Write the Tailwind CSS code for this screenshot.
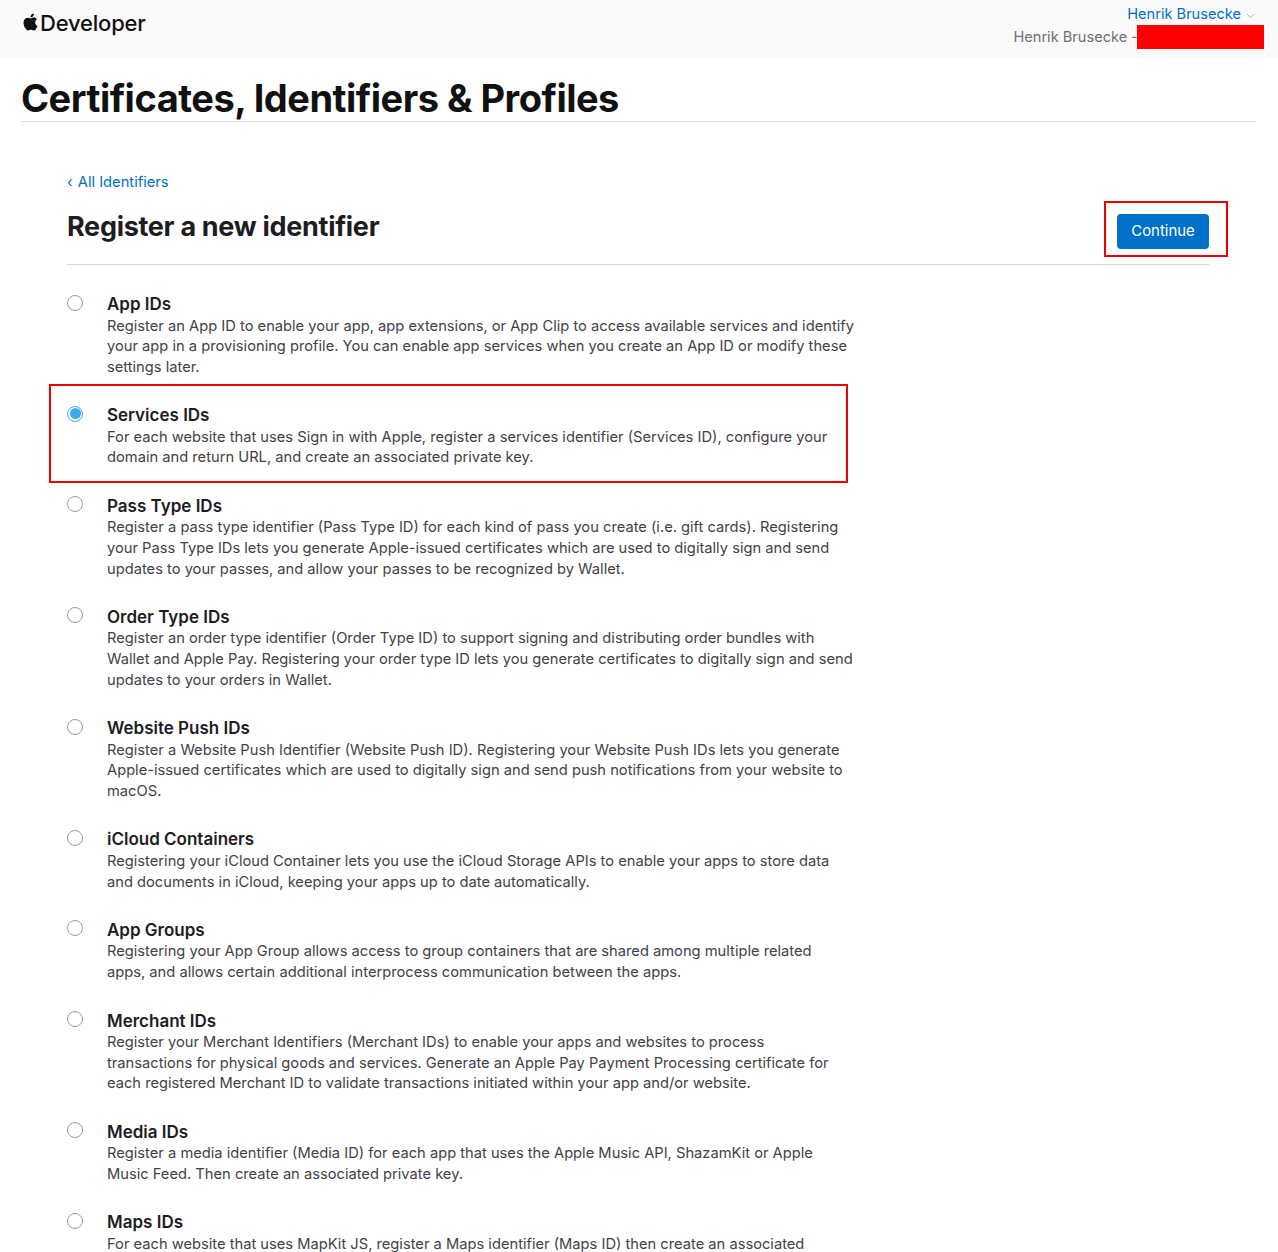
<!DOCTYPE html>
<html lang="en">
<head>
    <meta charset="UTF-8">
    <meta name="viewport" content="width=device-width, initial-scale=1.0">
    <script src="https://cdn.jsdelivr.net/npm/@tailwindcss/browser@4"></script>
    <title>Register a new identifier</title>
</head>
<body class="bg-white font-['Inter',sans-serif] text-[#1d1d1f] h-[1252px] overflow-hidden">
    <!-- Top bar -->
    <header class="h-[57px] bg-[#fafafa] flex justify-between pl-[22px] pr-[14px]">
        <a class="flex items-start pt-[10px] text-[22px] leading-[26px] font-medium tracking-[-0.2px] text-[#111]">
            <svg class="w-[17px] h-[20px] mt-[2px] mr-[1px]" viewBox="0 0 24 24" fill="#111"><path d="M12.152 6.896c-.948 0-2.415-1.078-3.96-1.04-2.04.027-3.91 1.183-4.961 3.014-2.117 3.675-.546 9.103 1.519 12.09 1.013 1.454 2.208 3.09 3.792 3.039 1.52-.065 2.09-.987 3.935-.987 1.831 0 2.35.987 3.96.948 1.637-.026 2.676-1.48 3.676-2.948 1.156-1.688 1.636-3.325 1.662-3.415-.039-.013-3.182-1.221-3.22-4.857-.026-3.04 2.48-4.494 2.597-4.559-1.429-2.09-3.623-2.324-4.39-2.376-2-.156-3.675 1.09-4.61 1.09zM15.53 3.83c.843-1.012 1.4-2.427 1.245-3.83-1.207.052-2.662.805-3.532 1.818-.78.896-1.454 2.338-1.273 3.714 1.338.104 2.715-.688 3.559-1.701"/></svg>
            <span>Developer</span>
        </a>
        <div class="text-[14.6px] leading-[23px] pt-[3px]">
            <div class="flex items-center justify-end pr-[9px] text-[#0070c9]">
                <span>Henrik Brusecke</span>
                <svg class="w-[9px] h-[6px] ml-[5px] mt-[2px]" viewBox="0 0 9 6" fill="none" stroke="#8fbde6" stroke-width="1"><path d="M1 1l3.5 3.5L8 1"/></svg>
            </div>
            <div class="flex items-center justify-end text-[#6e6e73]">
                <span>Henrik Brusecke -</span>
                <span class="w-[127px] h-[24px] bg-[#ff0000] -ml-[1px] -mt-[2px] block"></span>
            </div>
        </div>
    </header>

    <main class="px-[21px] pr-[23px]">
        <h1 class="h-[65px] pt-[17px] text-[38px] leading-[48px] font-bold tracking-[-0.5px] text-[#111] border-b border-[#e0e0e0] whitespace-nowrap">Certificates, Identifiers &amp; Profiles</h1>

        <div class="mx-[46px] pt-[50px]">
            <a class="block text-[14.7px] leading-[20px] text-[#0070c9]"><span class="mr-[1px]">‹</span> All Identifiers</a>

            <div class="flex items-center justify-between h-[71px] pb-[2px] border-b border-[#d6d6d6] mt-[2px]">
                <h2 class="text-[27px] leading-[34px] font-bold tracking-[-0.3px] text-[#1d1d1f] -mt-[3px]">Register a new identifier</h2>
                <div class="relative mt-[7px]">
                    <button class="block w-[92px] h-[35px] -mt-[1px] rounded-[4px] bg-[#0070c9] text-white text-[14.9px]">Continue</button>
                    <div class="absolute -left-[13px] -top-[14px] w-[124px] h-[56px] border-2 border-[#f00000]"></div>
                </div>
            </div>

            <!-- Identifier types -->
            <div class="pt-[29px]">
                <div class="flex h-[111.2px]">
                    <span class="w-[16px] h-[16px] mt-[0.5px] mr-[24px] shrink-0 rounded-full border border-[#9a9aa8] bg-white"></span>
                    <div class="w-[749px]">
                        <h3 class="text-[17px] leading-[21px] mb-[0.5px] font-semibold text-[#1d1d1f]">App IDs</h3>
                        <p class="text-[14.7px] leading-[20.7px] text-[#424245]">Register an App ID to enable your app, app extensions, or App Clip to access available services and identify your app in a provisioning profile. You can enable app services when you create an App ID or modify these settings later.</p>
                    </div>
                </div>
                <div class="flex h-[90.6px] relative">
                    <span class="w-[16px] h-[16px] mt-[0.5px] mr-[24px] shrink-0 rounded-full border border-[#3fa9ee] bg-white flex items-center justify-center"><span class="w-[11px] h-[11px] rounded-full bg-[#3fa9ee]"></span></span>
                    <div class="w-[749px]">
                        <h3 class="text-[17px] leading-[21px] mb-[0.5px] font-semibold text-[#1d1d1f]">Services IDs</h3>
                        <p class="text-[14.7px] leading-[20.7px] text-[#424245]">For each website that uses Sign in with Apple, register a services identifier (Services ID), configure your domain and return URL, and create an associated private key.</p>
                    </div>
                    <div class="absolute -left-[18px] -top-[21px] w-[799px] h-[99px] border-2 border-[#f00000]"></div>
                </div>
                <div class="flex h-[111.2px]">
                    <span class="w-[16px] h-[16px] mt-[0.5px] mr-[24px] shrink-0 rounded-full border border-[#9a9aa8] bg-white"></span>
                    <div class="w-[749px]">
                        <h3 class="text-[17px] leading-[21px] mb-[0.5px] font-semibold text-[#1d1d1f]">Pass Type IDs</h3>
                        <p class="text-[14.7px] leading-[20.7px] text-[#424245]">Register a pass type identifier (Pass Type ID) for each kind of pass you create (i.e. gift cards). Registering your Pass Type IDs lets you generate Apple-issued certificates which are used to digitally sign and send updates to your passes, and allow your passes to be recognized by Wallet.</p>
                    </div>
                </div>
                <div class="flex h-[111.2px]">
                    <span class="w-[16px] h-[16px] mt-[0.5px] mr-[24px] shrink-0 rounded-full border border-[#9a9aa8] bg-white"></span>
                    <div class="w-[749px]">
                        <h3 class="text-[17px] leading-[21px] mb-[0.5px] font-semibold text-[#1d1d1f]">Order Type IDs</h3>
                        <p class="text-[14.7px] leading-[20.7px] text-[#424245]">Register an order type identifier (Order Type ID) to support signing and distributing order bundles with Wallet and Apple Pay. Registering your order type ID lets you generate certificates to digitally sign and send updates to your orders in Wallet.</p>
                    </div>
                </div>
                <div class="flex h-[111.2px]">
                    <span class="w-[16px] h-[16px] mt-[0.5px] mr-[24px] shrink-0 rounded-full border border-[#9a9aa8] bg-white"></span>
                    <div class="w-[749px]">
                        <h3 class="text-[17px] leading-[21px] mb-[0.5px] font-semibold text-[#1d1d1f]">Website Push IDs</h3>
                        <p class="text-[14.7px] leading-[20.7px] text-[#424245]">Register a Website Push Identifier (Website Push ID). Registering your Website Push IDs lets you generate Apple-issued certificates which are used to digitally sign and send push notifications from your website to macOS.</p>
                    </div>
                </div>
                <div class="flex h-[90.6px]">
                    <span class="w-[16px] h-[16px] mt-[0.5px] mr-[24px] shrink-0 rounded-full border border-[#9a9aa8] bg-white"></span>
                    <div class="w-[749px]">
                        <h3 class="text-[17px] leading-[21px] mb-[0.5px] font-semibold text-[#1d1d1f]">iCloud Containers</h3>
                        <p class="text-[14.7px] leading-[20.7px] text-[#424245]">Registering your iCloud Container lets you use the iCloud Storage APIs to enable your apps to store data and documents in iCloud, keeping your apps up to date automatically.</p>
                    </div>
                </div>
                <div class="flex h-[90.6px]">
                    <span class="w-[16px] h-[16px] mt-[0.5px] mr-[24px] shrink-0 rounded-full border border-[#9a9aa8] bg-white"></span>
                    <div class="w-[749px]">
                        <h3 class="text-[17px] leading-[21px] mb-[0.5px] font-semibold text-[#1d1d1f]">App Groups</h3>
                        <p class="text-[14.7px] leading-[20.7px] text-[#424245]">Registering your App Group allows access to group containers that are shared among multiple related<br>apps, and allows certain additional interprocess communication between the apps.</p>
                    </div>
                </div>
                <div class="flex h-[111.2px]">
                    <span class="w-[16px] h-[16px] mt-[0.5px] mr-[24px] shrink-0 rounded-full border border-[#9a9aa8] bg-white"></span>
                    <div class="w-[749px]">
                        <h3 class="text-[17px] leading-[21px] mb-[0.5px] font-semibold text-[#1d1d1f]">Merchant IDs</h3>
                        <p class="text-[14.7px] leading-[20.7px] text-[#424245]">Register your Merchant Identifiers (Merchant IDs) to enable your apps and websites to process<br>transactions for physical goods and services. Generate an Apple Pay Payment Processing certificate for<br>each registered Merchant ID to validate transactions initiated within your app and/or website.</p>
                    </div>
                </div>
                <div class="flex h-[90.6px]">
                    <span class="w-[16px] h-[16px] mt-[0.5px] mr-[24px] shrink-0 rounded-full border border-[#9a9aa8] bg-white"></span>
                    <div class="w-[749px]">
                        <h3 class="text-[17px] leading-[21px] mb-[0.5px] font-semibold text-[#1d1d1f]">Media IDs</h3>
                        <p class="text-[14.7px] leading-[20.7px] text-[#424245]">Register a media identifier (Media ID) for each app that uses the Apple Music API, ShazamKit or Apple Music Feed. Then create an associated private key.</p>
                    </div>
                </div>
                <div class="flex h-[111.2px]">
                    <span class="w-[16px] h-[16px] mt-[0.5px] mr-[24px] shrink-0 rounded-full border border-[#9a9aa8] bg-white"></span>
                    <div class="w-[749px]">
                        <h3 class="text-[17px] leading-[21px] mb-[0.5px] font-semibold text-[#1d1d1f]">Maps IDs</h3>
                        <p class="text-[14.7px] leading-[20.7px] text-[#424245]">For each website that uses MapKit JS, register a Maps identifier (Maps ID) then create an associated</p>
                    </div>
                </div>
            </div>
        </div>
    </main>
</body>
</html>
